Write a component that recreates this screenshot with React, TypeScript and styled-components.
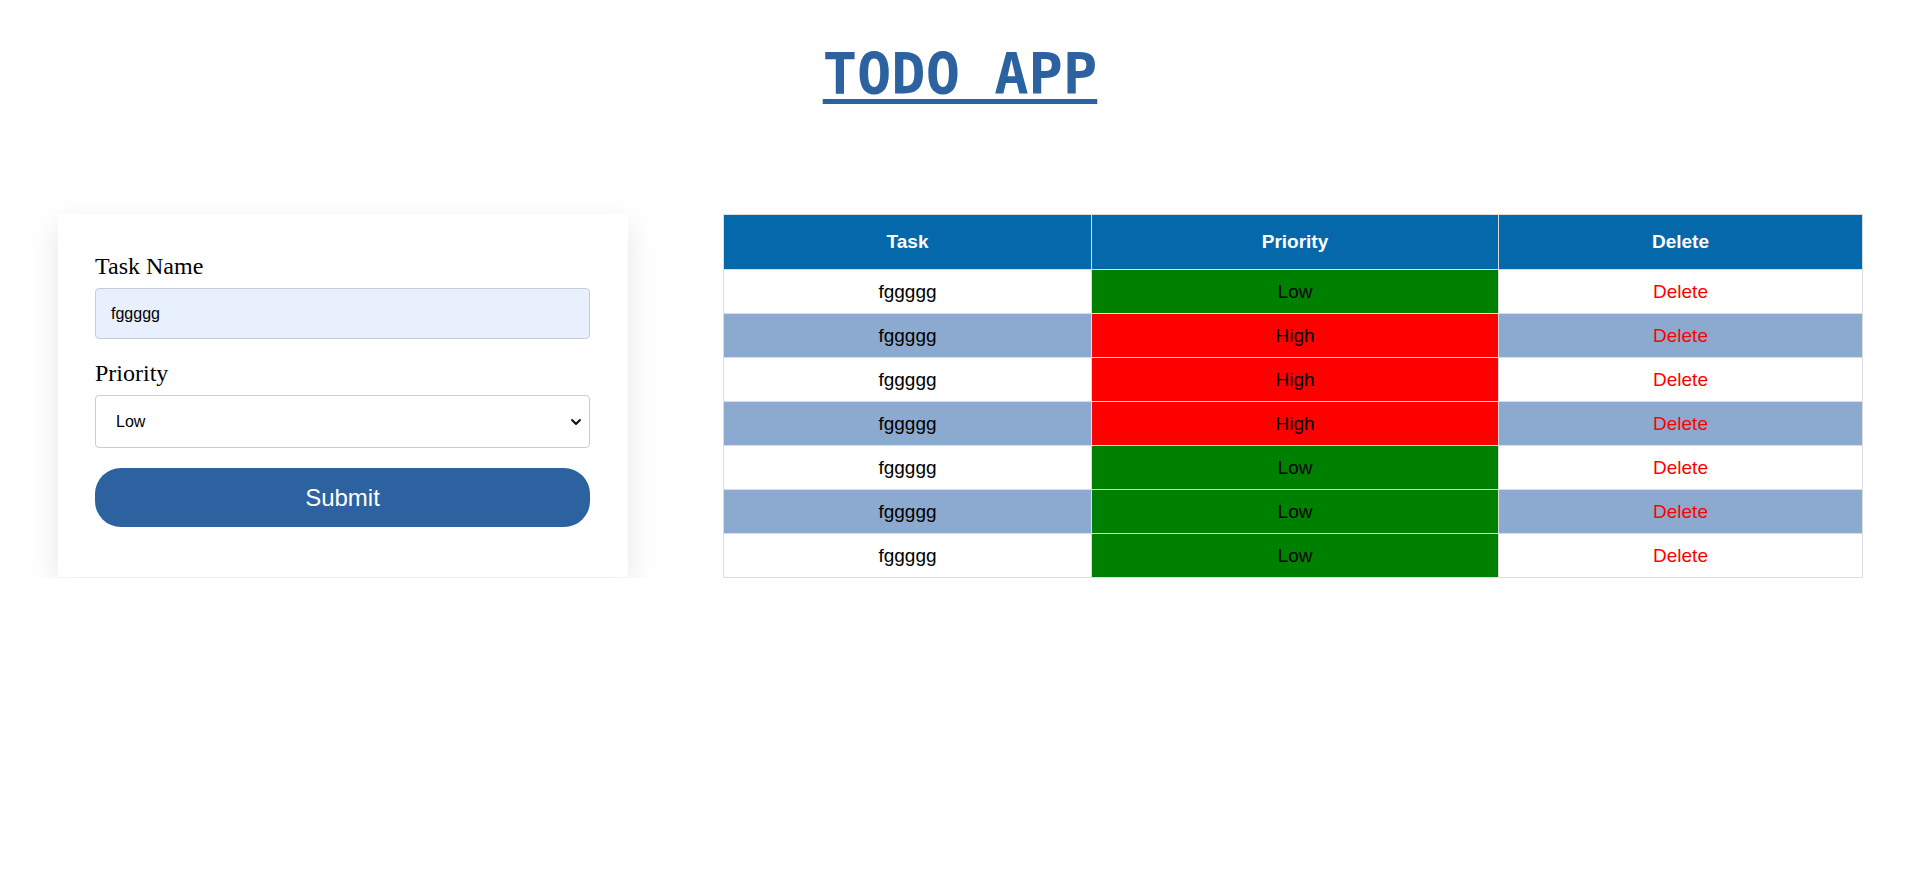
import React from "react";
import styled, { createGlobalStyle } from "styled-components";
import { ChevronDown } from "lucide-react";

type Priority = "Low" | "High";

const tasks: { name: string; priority: Priority }[] = [
  { name: "fggggg", priority: "Low" },
  { name: "fggggg", priority: "High" },
  { name: "fggggg", priority: "High" },
  { name: "fggggg", priority: "High" },
  { name: "fggggg", priority: "Low" },
  { name: "fggggg", priority: "Low" },
  { name: "fggggg", priority: "Low" },
];

const GlobalStyle = createGlobalStyle`
  body {
    margin: 0;
    background: #ffffff;
    font-family: "Liberation Serif", "Times New Roman", serif;
  }
`;

const Page = styled.div`
  width: 1920px;
`;

const Title = styled.h1`
  margin: 42px 0 0;
  text-align: center;
  font-family: "DejaVu Sans Mono", monospace;
  font-size: 57px;
  line-height: 64px;
  font-weight: bold;
  color: #2c62a0;
  text-decoration: underline;
  text-decoration-thickness: 5px;
  text-underline-offset: 5px;
`;

const Main = styled.main`
  display: flex;
  align-items: flex-start;
  gap: 95px;
  padding: 0 58px;
  margin-top: 108px;
`;

const Card = styled.form`
  width: 570px;
  flex-shrink: 0;
  box-sizing: border-box;
  padding: 39px 38px 50px 37px;
  background: #ffffff;
  box-shadow: 0 10px 30px rgba(0, 0, 0, 0.1);
  display: flex;
  flex-direction: column;
`;

const Label = styled.label`
  display: block;
  font-size: 24px;
  color: #000;
  margin-bottom: 8px;
`;

const TextInput = styled.input`
  box-sizing: border-box;
  width: 100%;
  height: 51px;
  margin-bottom: 21px;
  padding: 0 15px;
  border: 1px solid #c9ccd3;
  border-radius: 4px;
  background: #e8f0fe;
  font-family: "Liberation Sans", Arial, sans-serif;
  font-size: 16px;
  color: #000;
  outline: none;
`;

const SelectWrap = styled.div`
  position: relative;
  margin-bottom: 20px;
`;

const Select = styled.select`
  box-sizing: border-box;
  display: block;
  width: 100%;
  height: 53px;
  padding: 0 36px 0 20px;
  border: 1px solid #cccccc;
  border-radius: 4px;
  background: #ffffff;
  appearance: none;
  font-family: "Liberation Sans", Arial, sans-serif;
  font-size: 16px;
  color: #000;
`;

const Chevron = styled(ChevronDown)`
  position: absolute;
  right: 6px;
  top: 50%;
  transform: translateY(-50%);
  pointer-events: none;
  color: #111;
`;

const SubmitButton = styled.button`
  width: 100%;
  height: 59px;
  border: none;
  border-radius: 26px;
  background: #2c62a0;
  color: #ffffff;
  font-family: "Liberation Sans", Arial, sans-serif;
  font-size: 24px;
  cursor: pointer;
`;

const Table = styled.table`
  width: 1136px;
  border-collapse: collapse;
  table-layout: fixed;
  font-family: "Liberation Sans", Arial, sans-serif;
  font-size: 19px;
  text-align: center;
`;

const HeadCell = styled.th<{ $width: number }>`
  width: ${(p) => p.$width}px;
  height: 54px;
  padding: 0;
  background: #0568ab;
  color: #ffffff;
  font-weight: bold;
  border: 1px solid #dddddd;
`;

const Row = styled.tr<{ $alt: boolean }>`
  height: 44px;
  background: ${(p) => (p.$alt ? "#8caacf" : "#ffffff")};
`;

const Cell = styled.td`
  padding: 0;
  border: 1px solid #dddddd;
  color: #000;
`;

const PriorityCell = styled(Cell)<{ $priority: Priority }>`
  background: ${(p) => (p.$priority === "Low" ? "#008000" : "#ff0000")};
`;

const DeleteButton = styled.button`
  border: none;
  background: none;
  padding: 0;
  color: #ff0000;
  font-family: inherit;
  font-size: inherit;
  cursor: pointer;
`;

export default function App() {
  return (
    <Page>
      <GlobalStyle />
      <Title>TODO APP</Title>
      <Main>
        <Card onSubmit={(e) => e.preventDefault()}>
          <Label htmlFor="task">Task Name</Label>
          <TextInput id="task" defaultValue="fggggg" />
          <Label htmlFor="priority">Priority</Label>
          <SelectWrap>
            <Select id="priority" defaultValue="Low">
              <option>Low</option>
              <option>High</option>
            </Select>
            <Chevron size={16} strokeWidth={3} />
          </SelectWrap>
          <SubmitButton type="submit">Submit</SubmitButton>
        </Card>
        <Table>
          <thead>
            <tr>
              <HeadCell $width={367}>Task</HeadCell>
              <HeadCell $width={406}>Priority</HeadCell>
              <HeadCell $width={363}>Delete</HeadCell>
            </tr>
          </thead>
          <tbody>
            {tasks.map((t, i) => (
              <Row key={i} $alt={i % 2 === 1}>
                <Cell>{t.name}</Cell>
                <PriorityCell $priority={t.priority}>{t.priority}</PriorityCell>
                <Cell>
                  <DeleteButton type="button">Delete</DeleteButton>
                </Cell>
              </Row>
            ))}
          </tbody>
        </Table>
      </Main>
    </Page>
  );
}
